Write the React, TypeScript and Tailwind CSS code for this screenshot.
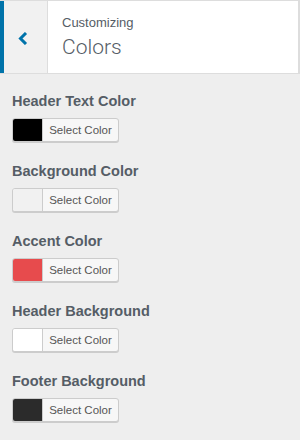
const colors = [
  { label: "Header Text Color", swatch: "bg-[#000000]" },
  { label: "Background Color", swatch: "bg-[#f1f1f1]" },
  { label: "Accent Color", swatch: "bg-[#e74b4d]" },
  { label: "Header Background", swatch: "bg-[#ffffff]" },
  { label: "Footer Background", swatch: "bg-[#2b2b2b]" },
];

export default function App() {
  return (
    <div className="w-[300px] h-[440px] bg-[#eeeeee] overflow-hidden font-['Liberation_Sans',Arial,sans-serif] text-[#555d66]">
      <div className="flex h-[74px] border-t border-b border-[#dddddd] bg-white">
        <div className="w-[4px] bg-[#0073aa]" />
        <button className="w-[44px] flex items-center pl-[14px] pt-[3px] bg-[#f1f1f1] border-r border-[#dddddd] text-[#0073aa]">
          <svg width="10" height="13" viewBox="0 0 10 13" fill="none">
            <path d="M8 1 L2.5 6.5 L8 12" stroke="currentColor" strokeWidth="3" />
          </svg>
        </button>
        <div className="flex-1 flex flex-col justify-center pl-[14px] border-r-2 border-[#dddddd]">
          <span className="text-[13px] leading-[18px]">Customizing</span>
          <span className="text-[21px] leading-[26px] font-light font-['Roboto',sans-serif] mt-[2px]">Colors</span>
        </div>
      </div>
      <div className="flex flex-col pt-[17px] px-[12px]">
        {colors.map((c) => (
          <div key={c.label} className="flex flex-col h-[70px]">
            <div className="text-[14.5px] leading-[20px] font-bold mb-[7px]">{c.label}</div>
            <button className="flex w-[107px] h-[24px] border border-[#cccccc] rounded-[3px] bg-[#f7f7f7] shadow-[0_1px_0_#cccccc] overflow-hidden">
              <span className={`w-[30px] h-full border-r border-[#cccccc] ${c.swatch}`} />
              <span className="flex-1 text-[11.5px] leading-[22px] text-[#555555] text-center">Select Color</span>
            </button>
          </div>
        ))}
      </div>
    </div>
  );
}
